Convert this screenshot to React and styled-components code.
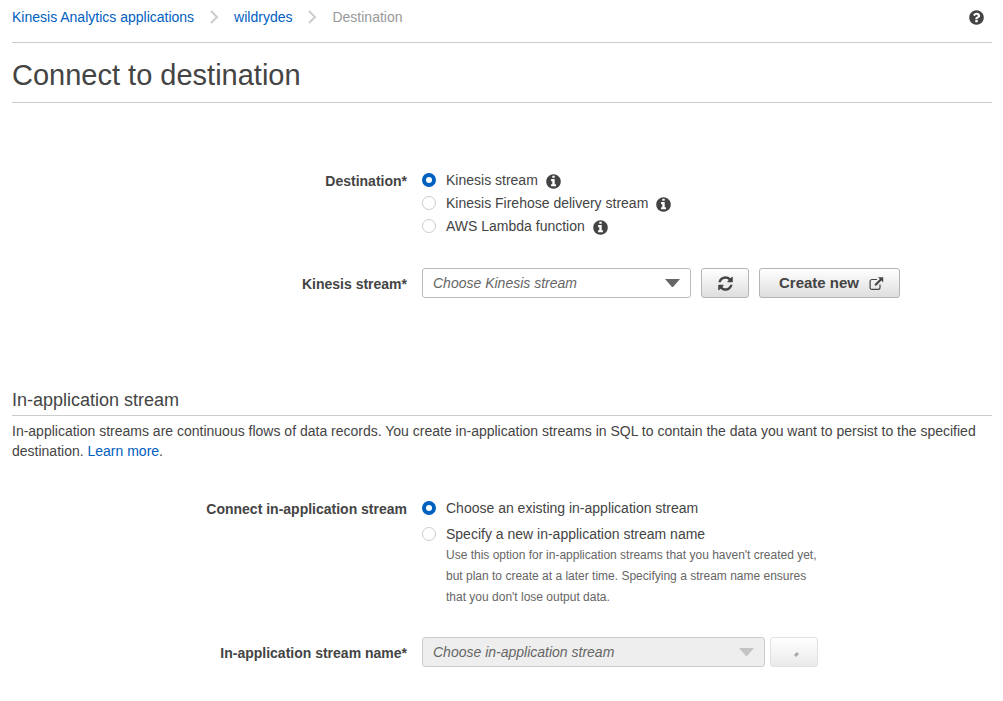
import React from "react";
import styled, { createGlobalStyle } from "styled-components";

const GlobalStyle = createGlobalStyle`
  *, *::before, *::after { box-sizing: border-box; }
  body {
    margin: 0;
    background: #fff;
    color: #444;
    font: 14px/20px "Liberation Sans", Arial, Helvetica, sans-serif;
  }
`;

const Page = styled.main`
  padding: 0 11px 34px 12px;
`;

const TopBar = styled.header`
  display: flex;
  align-items: center;
  justify-content: space-between;
  height: 43px;
  padding: 0 7px 8px 0;
  border-bottom: 1px solid #ccc;
`;

const Crumbs = styled.ol`
  display: flex;
  align-items: center;
  margin: 0;
  padding: 0;
  list-style: none;
`;

const Crumb = styled.li`
  display: flex;
  align-items: center;
  color: #999;
`;

const Chevron = styled.svg`
  width: 10px;
  height: 16px;
  margin: 0 15px;
  fill: none;
  stroke: #ccc;
  stroke-width: 2;
`;

const Link = styled.a`
  color: #0060c0;
  text-decoration: none;
`;

const HelpButton = styled.button`
  display: flex;
  padding: 0;
  border: 0;
  background: none;
  color: #444;
`;

const Icon = styled.svg`
  display: block;
  flex: none;
  width: ${(p) => p.$size}px;
  height: ${(p) => p.$size}px;
  fill: currentColor;
`;

const Title = styled.h1`
  margin: 0;
  padding: 15px 0 9px;
  border-bottom: 1px solid #ccc;
  font-size: 29px;
  line-height: 35px;
  font-weight: 400;
`;

const SectionTitle = styled.h2`
  margin: 0;
  padding-bottom: 3px;
  border-bottom: 1px solid #ccc;
  font-size: 18px;
  line-height: 24px;
  font-weight: 400;
`;

const Description = styled.p`
  margin: 5px 0 0;
`;

const Form = styled.form`
  display: grid;
  row-gap: ${(p) => p.$gap}px;
  padding: ${(p) => p.$pad};
`;

const Field = styled.div`
  display: grid;
  grid-template-columns: 395px minmax(0, 1fr);
  column-gap: 15px;
  align-items: ${(p) => (p.$center ? "center" : "start")};
`;

const FieldLabel = styled.label`
  padding-top: 1px;
  font-weight: 700;
  text-align: right;
`;

const Options = styled.div`
  display: grid;
  row-gap: ${(p) => p.$gap}px;
`;

const Option = styled.div`
  display: flex;
  align-items: center;
`;

const OptionLabel = styled.label`
  display: flex;
  align-items: center;
  gap: 10px;
`;

const Radio = styled.input`
  appearance: none;
  width: 14px;
  height: 14px;
  margin: 0;
  border: 1px solid #ccc;
  border-radius: 50%;
  background: #fff;
  &:checked { border: 4px solid #0060c0; }
`;

const InfoButton = styled(HelpButton)`
  margin: 3px 0 0 7px;
`;

const Hint = styled.p`
  max-width: 404px;
  margin: 1px 0 0;
  padding-left: 24px;
  color: #666;
  font-size: 12px;
  line-height: 21px;
`;

const Controls = styled.div`
  display: flex;
  gap: ${(p) => p.$gap}px;
`;

const SelectBox = styled.div`
  position: relative;
  width: ${(p) => p.$width}px;
`;

const Select = styled.select`
  appearance: none;
  display: block;
  width: 100%;
  height: 30px;
  padding: 0 36px 0 10px;
  border: 1px solid ${(p) => (p.disabled ? "#ccc" : "#bbb")};
  border-radius: 3px;
  background: ${(p) => (p.disabled ? "#eee" : "#fff")};
  color: #666;
  opacity: 1;
  font: italic 14px/20px "Liberation Sans", Arial, Helvetica, sans-serif;
`;

const Arrow = styled.svg`
  position: absolute;
  top: 11px;
  right: 11px;
  width: 15px;
  height: 8px;
  fill: ${(p) => (p.$muted ? "#c4c4c4" : "#666")};
  pointer-events: none;
`;

const Button = styled.button`
  display: flex;
  align-items: center;
  justify-content: center;
  gap: 10px;
  height: 30px;
  min-width: 48px;
  padding: 0 ${(p) => (p.$wide ? 15 : 8)}px 0 ${(p) => (p.$wide ? 19 : 8)}px;
  border: 1px solid ${(p) => (p.disabled ? "#e2e2e2" : "#b4b4b4")};
  border-radius: 3px;
  background: ${(p) =>
    p.disabled
      ? "linear-gradient(#fff, #eaeaea)"
      : "linear-gradient(#fff, #dedede)"};
  color: #444;
  font: 700 15px/20px "Liberation Sans", Arial, Helvetica, sans-serif;
`;

const DISC =
  "m640 416q0 209-103 385.5t-279.5 279.5-385.5 103-385.5-103-279.5-279.5-103-385.5 103-385.5 279.5-279.5 385.5-103 385.5 103 279.5 279.5 103 385.5z";

const InfoIcon = () => (
  <Icon $size={17} viewBox="0 0 1792 1792" aria-hidden="true">
    <path
      d={
        "M1152 1376v-160q0-14-9-23t-23-9h-96v-512q0-14-9-23t-23-9h-320q-14 0-23 9t-9 23v160q0 14 9 23t23 9h96v320h-96q-14 0-23 9t-9 23v160q0 14 9 23t23 9h448q14 0 23-9t9-23zm-128-896v-160q0-14-9-23t-23-9h-192q-14 0-23 9t-9 23v160q0 14 9 23t23 9h192q14 0 23-9t9-23z" +
        DISC
      }
    />
  </Icon>
);

const HelpIcon = () => (
  <Icon $size={17} viewBox="0 0 1792 1792" aria-hidden="true">
    <path d="M1024 1376v-192q0-14-9-23t-23-9h-192q-14 0-23 9t-9 23v192q0 14 9 23t23 9h192q14 0 23-9t9-23zm256-672q0-88-55.5-163t-138.5-116-170-41q-243 0-371 213-15 24 8 42l132 100q7 6 19 6 16 0 25-12 53-68 86-92 34-24 86-24 48 0 85.5 26t37.5 59q0 38-20 61t-68 45q-63 28-115.5 86.5t-52.5 125.5v36q0 14 9 23t23 9h192q14 0 23-9t9-23q0-19 21.5-49.5t54.5-49.5q32-18 49-28.5t46-35 44.5-48 28-60.5 12.5-81zm384 192q0 209-103 385.5t-279.5 279.5-385.5 103-385.5-103-279.5-279.5-103-385.5 103-385.5 279.5-279.5 385.5-103 385.5 103 279.5 279.5 103 385.5z" />
  </Icon>
);

const RefreshIcon = () => (
  <Icon $size={17} viewBox="0 0 1792 1792" aria-hidden="true">
    <path d="M1639 1056q0 5-1 7-64 268-268 434.5t-478 166.5q-146 0-282.5-55t-243.5-157l-129 129q-19 19-45 19t-45-19-19-45v-448q0-26 19-45t45-19h448q26 0 45 19t19 45-19 45l-137 137q71 66 161 102t187 36q134 0 250-65t186-179q11-17 53-117 8-23 30-23h192q13 0 22.5 9.5t9.5 22.5zm25-800v448q0 26-19 45t-45 19h-448q-26 0-45-19t-19-45 19-45l138-138q-148-137-349-137-134 0-250 65t-186 179q-11 17-53 117-8 23-30 23h-199q-13 0-22.5-9.5t-9.5-22.5v-7q65-268 270-434.5t480-166.5q146 0 284 55.5t245 156.5l130-129q19-19 45-19t45 19 19 45z" />
  </Icon>
);

const ExternalIcon = () => (
  <Icon $size={15} viewBox="0 0 15 15" aria-hidden="true">
    <path
      d="M8 3.5H3A1.9 1.9 0 0 0 1.1 5.400V11.500A1.900 1.900 0 0 0 3 13.400H9.100A1.900 1.900 0 0 0 11 11.500V8.500"
      fill="none"
      stroke="currentColor"
      strokeWidth="1.2"
    />
    <path d="M9 1.200H14.200V6.400L12.400 4.600L6.900 10.100L5.400 8.600L10.900 3.100Z" />
  </Icon>
);

const SpinnerIcon = () => (
  <Icon $size={16} viewBox="0 0 16 16" aria-hidden="true">
    <path d="M9 12L12 9" stroke="#aaa" strokeWidth="3" />
  </Icon>
);

const Separator = () => (
  <Chevron viewBox="0 0 10 16" aria-hidden="true">
    <path d="M2 2L8 8L2 14" />
  </Chevron>
);

function RadioOption({ name, id, label, info, defaultChecked }) {
  return (
    <Option>
      <OptionLabel htmlFor={id}>
        <Radio type="radio" name={name} id={id} defaultChecked={defaultChecked} />
        {label}
      </OptionLabel>
      {info && (
        <InfoButton type="button" aria-label={`About ${label}`}>
          <InfoIcon />
        </InfoButton>
      )}
    </Option>
  );
}

function Dropdown({ id, width, placeholder, disabled }) {
  return (
    <SelectBox $width={width}>
      <Select id={id} disabled={disabled} defaultValue="">
        <option value="">{placeholder}</option>
      </Select>
      <Arrow viewBox="0 0 15 8" $muted={disabled} aria-hidden="true">
        <path d="M0 0H15L8.500 7.500Q7.500 8.500 6.500 7.500Z" />
      </Arrow>
    </SelectBox>
  );
}

export default function App() {
  return (
    <>
      <GlobalStyle />
      <Page>
        <TopBar>
          <nav aria-label="Breadcrumb">
            <Crumbs>
              <Crumb>
                <Link href="#applications">Kinesis Analytics applications</Link>
                <Separator />
              </Crumb>
              <Crumb>
                <Link href="#wildrydes">wildrydes</Link>
                <Separator />
              </Crumb>
              <Crumb aria-current="page">Destination</Crumb>
            </Crumbs>
          </nav>
          <HelpButton type="button" aria-label="Help">
            <HelpIcon />
          </HelpButton>
        </TopBar>
        <Title>Connect to destination</Title>

        <Form $gap={32} $pad="67px 0 90px">
          <Field role="radiogroup" aria-labelledby="destination-label">
            <FieldLabel as="div" id="destination-label">Destination*</FieldLabel>
            <Options $gap={3}>
              <RadioOption name="destination" id="dest-stream" label="Kinesis stream" info defaultChecked />
              <RadioOption name="destination" id="dest-firehose" label="Kinesis Firehose delivery stream" info />
              <RadioOption name="destination" id="dest-lambda" label="AWS Lambda function" info />
            </Options>
          </Field>
          <Field $center>
            <FieldLabel htmlFor="kinesis-stream">Kinesis stream*</FieldLabel>
            <Controls $gap={10}>
              <Dropdown id="kinesis-stream" width={269} placeholder="Choose Kinesis stream" />
              <Button type="button" aria-label="Refresh streams">
                <RefreshIcon />
              </Button>
              <Button type="button" $wide>
                Create new
                <ExternalIcon />
              </Button>
            </Controls>
          </Field>
        </Form>

        <SectionTitle>In-application stream</SectionTitle>
        <Description>
          In-application streams are continuous flows of data records. You create in-application streams in SQL to
          contain the data you want to persist to the specified destination.{" "}
          <Link href="#learn-more">Learn more</Link>.
        </Description>

        <Form $gap={29} $pad="37px 0 0">
          <Field role="radiogroup" aria-labelledby="connect-label">
            <FieldLabel as="div" id="connect-label">Connect in-application stream</FieldLabel>
            <div>
              <Options $gap={6}>
                <RadioOption name="connect" id="connect-existing" label="Choose an existing in-application stream" defaultChecked />
                <RadioOption name="connect" id="connect-new" label="Specify a new in-application stream name" />
              </Options>
              <Hint>
                Use this option for in-application streams that you haven't created yet, but plan to create at a later
                time. Specifying a stream name ensures that you don't lose output data.
              </Hint>
            </div>
          </Field>
          <Field $center>
            <FieldLabel htmlFor="stream-name">In-application stream name*</FieldLabel>
            <Controls $gap={5}>
              <Dropdown id="stream-name" width={343} placeholder="Choose in-application stream" disabled />
              <Button type="button" aria-label="Loading streams" disabled>
                <SpinnerIcon />
              </Button>
            </Controls>
          </Field>
        </Form>
      </Page>
    </>
  );
}
